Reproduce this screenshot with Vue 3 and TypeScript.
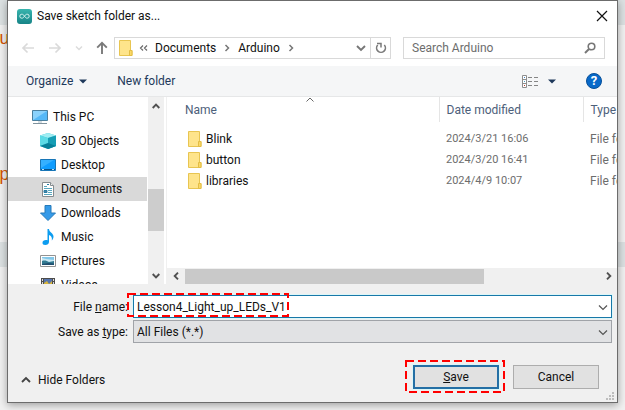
<script setup lang="ts">
import { ref } from 'vue'

interface Place {
  name: string
  icon: 'pc' | 'objects' | 'desktop' | 'documents' | 'downloads' | 'music' | 'pictures' | 'videos'
}

interface Folder {
  name: string
  modified: string
  type: string
}

const places: Place[] = [
  { name: 'This PC', icon: 'pc' },
  { name: '3D Objects', icon: 'objects' },
  { name: 'Desktop', icon: 'desktop' },
  { name: 'Documents', icon: 'documents' },
  { name: 'Downloads', icon: 'downloads' },
  { name: 'Music', icon: 'music' },
  { name: 'Pictures', icon: 'pictures' },
  { name: 'Videos', icon: 'videos' },
]

const folders: Folder[] = [
  { name: 'Blink', modified: '2024/3/21 16:06', type: 'File folder' },
  { name: 'button', modified: '2024/3/20 16:41', type: 'File folder' },
  { name: 'libraries', modified: '2024/4/9 10:07', type: 'File folder' },
]

const selected = ref('Documents')
const fileName = ref('Lesson4_Light_up_LEDs_V1')
const fileType = ref('All Files (*.*)')
const search = ref('')
</script>

<template>
  <div class="screen">
    <div class="editor" aria-hidden="true">
      <div class="band top"></div>
      <div class="code first">u</div>
      <div class="code second">p</div>
      <div class="band status"></div>
    </div>

    <form class="dialog" role="dialog" aria-labelledby="dialog-title" @submit.prevent>
      <header class="titlebar">
        <svg class="logo" width="15" height="15" viewBox="0 0 15 15">
          <defs>
            <linearGradient id="teal" x1="0" y1="0" x2="0" y2="1">
              <stop offset="0" stop-color="#38b5ae" />
              <stop offset="1" stop-color="#178487" />
            </linearGradient>
          </defs>
          <rect width="15" height="15" rx="3" fill="url(#teal)" />
          <path d="M7.5 7.2C6.5 5.6 5.7 5.2 4.8 5.2a2 2 0 0 0 0 4c.9 0 1.7-.4 2.7-2s1.8-2 2.7-2a2 2 0 0 1 0 4c-.9 0-1.7-.4-2.7-2z" fill="none" stroke="#d5f3f0" />
        </svg>
        <h1 id="dialog-title">Save sketch folder as...</h1>
        <button type="button" class="plain close" aria-label="Close">
          <svg width="12" height="12" viewBox="0 0 12 12"><path d="M1 1l10 10M11 1L1 11" fill="none" stroke="#111" stroke-width="1.2" /></svg>
        </button>
      </header>

      <div class="navbar">
        <div class="history">
          <button type="button" class="plain" aria-label="Back">
            <svg width="14" height="12" viewBox="0 0 14 12"><path d="M13 6H2M6.5 1.5L2 6l4.500 4.500" fill="none" stroke="#dadada" stroke-width="1.700" /></svg>
          </button>
          <button type="button" class="plain" aria-label="Forward">
            <svg width="14" height="12" viewBox="0 0 14 12"><path d="M1 6h11M7.500 1.500L12 6l-4.500 4.500" fill="none" stroke="#dadada" stroke-width="1.700" /></svg>
          </button>
          <button type="button" class="plain" aria-label="Recent locations">
            <svg width="8" height="6" viewBox="0 0 8 6"><path d="M1 1.500l3 3 3-3" fill="none" stroke="#dcdcdc" stroke-width="1.500" /></svg>
          </button>
          <button type="button" class="plain" aria-label="Up">
            <svg width="12" height="14" viewBox="0 0 12 14"><path d="M6 13V2M1.200 6.700L6 1.900l4.800 4.800" fill="none" stroke="#7a7a7a" stroke-width="1.900" /></svg>
          </button>
        </div>
        <nav class="address" aria-label="Location">
          <svg class="folder" width="14" height="16" viewBox="0 0 14 16">
            <path d="M.5.5h11v10h1.500v5H.5z" fill="#fee48b" stroke="#e8c551" />
            <path d="M10.500 15.500v-5H13v5z" fill="#fbd968" stroke="#e3bd45" />
          </svg>
          <svg class="dbl" width="9" height="6" viewBox="0 0 9 6"><path d="M4 .5L1.500 3 4 5.500M8 .5L5.500 3 8 5.500" fill="none" stroke="#6a6a6a" stroke-width="1.200" /></svg>
          <a href="#">Documents</a>
          <svg class="sep" width="6" height="8" viewBox="0 0 6 8"><path d="M1.500 1l3 3-3 3" fill="none" stroke="#777" stroke-width="1.500" /></svg>
          <a href="#">Arduino</a>
          <svg class="sep" width="6" height="8" viewBox="0 0 6 8"><path d="M1.500 1l3 3-3 3" fill="none" stroke="#777" stroke-width="1.500" /></svg>
          <button type="button" class="plain drop" aria-label="Previous locations">
            <svg width="10" height="7" viewBox="0 0 10 7"><path d="M1 1l4 4 4-4" fill="none" stroke="#777" stroke-width="1.900" /></svg>
          </button>
          <button type="button" class="plain refresh" aria-label="Refresh">
            <svg width="12" height="12" viewBox="0 0 12 12">
              <path d="M9.300 3a4.400 4.400 0 1 1-6.600 0" fill="none" stroke="#7a7a7a" stroke-width="1.600" />
              <path d="M2 1.500h4v4" fill="none" stroke="#7a7a7a" stroke-width="1.500" />
            </svg>
          </button>
        </nav>
        <div class="search">
          <input v-model="search" type="text" placeholder="Search Arduino" aria-label="Search Arduino" />
          <svg width="12" height="12" viewBox="0 0 12 12">
            <circle cx="7.500" cy="4.500" r="3.300" fill="none" stroke="#777" stroke-width="1.600" />
            <path d="M5 7L1 11" stroke="#777" stroke-width="2" />
          </svg>
        </div>
      </div>

      <div class="toolbar">
        <button type="button" class="plain">
          Organize
          <svg width="8" height="5" viewBox="0 0 8 5"><path d="M0 .5h8L4 4.500z" fill="#1e395b" /></svg>
        </button>
        <button type="button" class="plain">New folder</button>
        <button type="button" class="plain view" aria-label="Change your view">
          <svg width="17" height="13" viewBox="0 0 17 13">
            <path d="M.5.5h4v12h-4zM.5 4.500h4M.5 8.500h4" fill="#fff" stroke="#8d8d8d" />
            <path d="M2 2.500h1" stroke="#3e7fc1" /><path d="M2 6.500h1" stroke="#4ba3c7" /><path d="M2 10.500h1" stroke="#c0392b" />
            <path d="M6 2.500h4M12 2.500h4M6 6.500h4M12 6.500h4M6 10.500h4M12 10.500h4" stroke="#858585" />
          </svg>
          <svg width="8" height="5" viewBox="0 0 8 5"><path d="M0 .5h8L4 4.500z" fill="#1e395b" /></svg>
        </button>
        <button type="button" class="plain help" aria-label="Help">?</button>
      </div>

      <main class="panes">
        <ul class="places">
          <li v-for="place in places" :key="place.name">
            <button
              type="button"
              class="plain place"
              :class="{ nested: place.icon !== 'pc', current: selected === place.name }"
              @click="selected = place.name"
            >
              <svg v-if="place.icon === 'pc'" width="16" height="16" viewBox="0 0 16 16">
                <path d="M.5 1.500h15v10H.5z" fill="#55b8f7" stroke="#4a7f9e" />
                <path d="M1 2h14L1 11z" fill="#8ad2fc" />
                <path d="M6 12h4v2H6z" fill="#d4dde2" /><path d="M1 14.500h14" stroke="#7f929d" />
              </svg>
              <svg v-else-if="place.icon === 'objects'" width="16" height="16" viewBox="0 0 16 16">
                <path d="M8 0l8 2.500v10.500L8 16 0 13V2.500z" fill="#35c6d8" />
                <path d="M8 0l8 2.500L8 5 0 2.500z" fill="#a0edf2" />
                <path d="M8 5l8-2.500V13l-8 3z" fill="#159db4" />
                <path d="M0 2.500L8 5v5L0 13z" fill="#5cdae5" /><path d="M8 10l8 3-8 3-8-3z" fill="#087f98" />
              </svg>
              <svg v-else-if="place.icon === 'desktop'" width="16" height="12" viewBox="0 0 16 12">
                <path d="M.5.5h15v11H.5z" fill="#109dff" stroke="#1876b7" />
                <path d="M1 1h13L1 9z" fill="#35b0ff" /><path d="M1 10.500h14" stroke="#08538a" />
                <path d="M2 10.500h2M12 10.500h2" stroke="#b1e1ff" />
              </svg>
              <svg v-else-if="place.icon === 'documents'" width="12" height="15" viewBox="0 0 12 15">
                <path d="M.5.500h8l3 3v11H.500z" fill="#fff" stroke="#858b8e" />
                <path d="M8.500.500v3h3" fill="#eee" stroke="#858b8e" />
                <path d="M2 4.500h3M2 6.500h8M6 8.500h4M6 10.500h4M2 12.500h8" stroke="#58a7bf" />
                <path d="M5 2.500h2M2 8.500h3v2H2z" fill="#5083a7" stroke="#287da3" />
              </svg>
              <svg v-else-if="place.icon === 'downloads'" width="16" height="16" viewBox="0 0 16 16">
                <path d="M5 .500h6V8h4.500L8 15.500.500 8H5z" fill="#359ae8" stroke="#277ab9" />
              </svg>
              <svg v-else-if="place.icon === 'music'" width="12" height="16" viewBox="0 0 12 16">
                <path d="M5.500 0h1.500c.3 3.500 4.500 4.200 4.500 7.500 0 1.800-.8 3-1.700 4 .5-3-.5-4.500-2.800-5.500v7c0 2-1.700 3-3.700 3S.500 15 .500 13.700c0-2 2.500-3.300 5-2.400z" fill="#0d9df0" />
              </svg>
              <svg v-else-if="place.icon === 'pictures'" width="16" height="12" viewBox="0 0 16 12">
                <path d="M.500.500h15v11H.500z" fill="#fff" stroke="#929292" />
                <path d="M2 2h12v8H2z" fill="#82c7e9" />
                <path d="M2 3l4 1 8 1v2H2z" fill="#cce9f4" /><path d="M2 6c3-1 5 0 7 1l5-1v4H2z" fill="#327a91" /><path d="M2 9l6-1 6 .500V10H2z" fill="#214f70" />
              </svg>
              <svg v-else width="14" height="14" viewBox="0 0 14 14">
                <path d="M0 0h14v14H0z" fill="#4c4c4c" />
                <path d="M1.500 1v13M12.500 1v13" stroke="#ddd" stroke-dasharray="2 1" />
                <path d="M3 1h8v12H3z" fill="#5574ad" /><path d="M3 5l3-2 2 3 3-3v4H3z" fill="#d8b53c" />
              </svg>
              <span>{{ place.name }}</span>
            </button>
          </li>
        </ul>
        <div class="vscroll">
          <svg width="8" height="6" viewBox="0 0 8 6"><path d="M.700 5L4 1.700 7.300 5" fill="none" stroke="#505050" stroke-width="1.900" /></svg>
          <div class="vtrack"><div class="vthumb"></div></div>
          <svg width="8" height="6" viewBox="0 0 8 6"><path d="M.700 1L4 4.300 7.300 1" fill="none" stroke="#505050" stroke-width="1.900" /></svg>
        </div>

        <section class="files">
          <svg class="sorted" width="8" height="5" viewBox="0 0 8 5"><path d="M.500 4.500L4 1l3.500 3.500" fill="none" stroke="#666" /></svg>
          <table>
            <thead>
              <tr>
                <th class="name">Name</th>
                <th class="date">Date modified</th>
                <th class="type">Type</th>
              </tr>
            </thead>
            <tbody>
              <tr v-for="folder in folders" :key="folder.name">
                <td class="name">
                  <div class="entry">
                    <svg width="14" height="16" viewBox="0 0 14 16">
                      <path d="M.500.500h11v10h1.500v5H.500z" fill="#fee48b" stroke="#e8c551" />
                      <path d="M10.500 15.500v-5H13v5z" fill="#fbd968" stroke="#e3bd45" />
                    </svg>
                    {{ folder.name }}
                  </div>
                </td>
                <td class="stamp">{{ folder.modified }}</td>
                <td>{{ folder.type }}</td>
              </tr>
            </tbody>
          </table>
          <div class="hscroll">
            <svg width="6" height="8" viewBox="0 0 6 8"><path d="M5 .700L1.700 4 5 7.300" fill="none" stroke="#505050" stroke-width="1.900" /></svg>
            <div class="htrack"><div class="hthumb"></div></div>
            <svg width="6" height="8" viewBox="0 0 6 8"><path d="M1 .700L4.300 4 1 7.300" fill="none" stroke="#505050" stroke-width="1.900" /></svg>
          </div>
        </section>
      </main>

      <div class="fields">
        <label for="file-name">File <u>n</u>ame:</label>
        <div class="control active">
          <input id="file-name" v-model="fileName" type="text" />
          <svg class="arrow" width="10" height="6" viewBox="0 0 10 6"><path d="M1 .500l4 4 4-4" fill="none" stroke="#555" stroke-width="1.200" /></svg>
          <svg class="mark name-mark" aria-hidden="true"><rect x="1" y="1" /></svg>
        </div>
        <label for="file-type">Save as <u>t</u>ype:</label>
        <div class="control">
          <select id="file-type" v-model="fileType">
            <option>All Files (*.*)</option>
          </select>
          <svg class="arrow" width="10" height="6" viewBox="0 0 10 6"><path d="M1 .500l4 4 4-4" fill="none" stroke="#555" stroke-width="1.200" /></svg>
        </div>
      </div>

      <footer class="actions">
        <button type="button" class="plain hide">
          <svg width="10" height="7" viewBox="0 0 10 7"><path d="M1 6l4-4 4 4" fill="none" stroke="#444" stroke-width="1.900" /></svg>
          Hide Folders
        </button>
        <div class="save-wrap">
          <button type="submit" class="push primary"><u>S</u>ave</button>
          <svg class="mark save-mark" aria-hidden="true"><rect x="1" y="1" /></svg>
        </div>
        <button type="button" class="push">Cancel</button>
        <svg class="grip" width="8" height="8" viewBox="0 0 8 8"><path d="M6 0h2v2H6zM3 3h2v2H3zM6 3h2v2H6zM0 6h2v2H0zM3 6h2v2H3zM6 6h2v2H6z" fill="#bdbdbd" /></svg>
      </footer>
    </form>
  </div>
</template>

<style>
body {
  margin: 0;
}
</style>

<style scoped>
* {
  box-sizing: border-box;
}

.screen {
  position: relative;
  height: 100vh;
  min-height: 380px;
  padding: 0 7px 7px;
  overflow: hidden;
  background: #f1f1f1;
  color: #111;
  font: 12px/16px Roboto, 'Open Sans', sans-serif;
}

.editor {
  position: absolute;
  inset: 0;
}

.band {
  position: absolute;
  left: 0;
  right: 0;
  height: 25px;
  background: #dce1e2;
}

.band.top {
  top: 0;
}

.band.status {
  top: 242px;
}

.code {
  position: absolute;
  left: -1px;
  color: #d35400;
  font: 18px/20px 'Liberation Mono', monospace;
}

.code.first {
  top: 29px;
}

.code.second {
  top: 165px;
}

.dialog {
  position: relative;
  display: flex;
  flex-direction: column;
  height: 100%;
  background: #f0f0f0;
  border: 1px solid #6c6c6c;
  box-shadow: 0 2px 8px rgba(0, 0, 0, 0.35);
}

button,
input,
select {
  color: inherit;
  font: inherit;
}

.plain {
  display: flex;
  align-items: center;
  padding: 0;
  border: 0;
  background: none;
}

svg {
  flex: none;
}

.titlebar {
  display: flex;
  align-items: center;
  height: 30px;
  padding: 0 9px;
  background: #fff;
}

h1 {
  flex: 1;
  margin: 0 0 0 5px;
  font-size: 12px;
  font-weight: 400;
}

.navbar {
  display: flex;
  align-items: center;
  height: 35px;
  padding: 0 12px 1px 13px;
  background: #fff;
}

.history {
  display: flex;
  align-items: center;
  gap: 13px;
  width: 93px;
}

.address,
.search {
  display: flex;
  align-items: center;
  height: 22px;
  border: 1px solid #d9d9d9;
}

.address {
  flex: 1;
  margin-right: 12px;
  padding-left: 4px;
}

.address a {
  color: inherit;
  text-decoration: none;
}

.dbl {
  margin: 0 7px 0 6px;
}

.sep {
  margin: 0 8px;
}

.drop {
  margin-left: auto;
  padding: 0 4px;
}

.refresh {
  justify-content: center;
  align-self: stretch;
  width: 20px;
  border-left: 1px solid #d9d9d9;
}

.search {
  width: 202px;
  padding: 0 8px;
}

.search input {
  flex: 1;
  min-width: 0;
  padding: 0;
  border: 0;
  outline: 0;
}

.search input::placeholder {
  color: #6d6d6d;
  opacity: 1;
}

.toolbar {
  display: flex;
  align-items: center;
  height: 31px;
  padding: 0 15px 0 18px;
  background: #f5f6f7;
  border-bottom: 1px solid #e6e7e8;
  color: #1e395b;
}

.toolbar .plain {
  gap: 6px;
  margin-right: 30px;
}

.toolbar .view {
  gap: 9px;
  margin-left: auto;
}

.toolbar .help {
  justify-content: center;
  width: 16px;
  height: 16px;
  margin: 0;
  border: 1px solid #07509a;
  border-radius: 50%;
  background: #0869c9;
  color: #fff;
  font-size: 13px;
  font-weight: 700;
}

.panes {
  display: flex;
  flex: 1;
  min-height: 0;
  background: #fff;
}

.places {
  width: 140px;
  margin: 0;
  padding: 8px 1px 0 0;
  overflow: hidden;
  list-style: none;
}

.place {
  gap: 5px;
  width: 100%;
  height: 24px;
  padding-left: 24px;
}

.place.nested {
  padding-left: 32px;
}

.place.nested svg {
  width: 16px;
}

.place.current {
  background: #d9d9d9;
}

.vscroll {
  display: flex;
  flex-direction: column;
  align-items: center;
  width: 16px;
  padding: 6px 0 5px;
  background: #f0f0f0;
}

.vtrack {
  flex: 1;
  display: flex;
  align-items: flex-end;
  width: 100%;
  padding-bottom: 42px;
}

.vthumb {
  width: 100%;
  height: 42px;
  background: #cdcdcd;
}

.files {
  position: relative;
  display: flex;
  flex: 1;
  flex-direction: column;
  justify-content: space-between;
  min-width: 0;
  margin-left: 2px;
  border-left: 1px solid #f0f0f0;
}

.sorted {
  position: absolute;
  top: 0;
  left: 139px;
}

table {
  width: 100%;
  border-collapse: collapse;
  table-layout: fixed;
}

th,
td {
  height: 21px;
  padding: 0 0 0 7px;
  overflow: hidden;
  color: #6d6d6d;
  font-weight: 400;
  text-align: left;
  white-space: nowrap;
}

th {
  height: 25px;
  border-left: 1px solid #e5e5e5;
  color: #4c607a;
}

th.name {
  padding-left: 18px;
  border-left: 0;
}

th.date {
  width: 144px;
}

th.type {
  width: 34px;
}

td.name {
  padding-left: 21px;
  color: #111;
}

td.stamp {
  font-size: 11px;
}

tbody::before {
  display: block;
  height: 6px;
  content: '';
}

.entry {
  display: flex;
  align-items: center;
  gap: 4px;
}

.hscroll {
  display: flex;
  align-items: center;
  height: 16px;
  padding: 0 5px 0 6px;
  background: #f0f0f0;
}

.htrack {
  flex: 1;
  height: 15px;
  margin: 0 6px;
}

.hthumb {
  width: 72%;
  height: 100%;
  background: #c9c9c9;
}

.fields {
  display: grid;
  grid-template-columns: 120px 1fr;
  gap: 2px 5px;
  padding: 11px 5px 0 0;
}

.fields label {
  align-self: center;
  text-align: right;
}

.control {
  position: relative;
  display: flex;
  height: 23px;
  border: 1px solid #a0a3a8;
  background: #e1e2e4;
}

.control.active {
  border-color: #1878a8;
  background: #fff;
  box-shadow: 0 0 0 1px #dcf6f8;
}

.control input,
.control select {
  flex: 1;
  min-width: 0;
  padding: 0 20px 0 3px;
  border: 0;
  outline: 0;
  background: none;
  appearance: none;
}

.arrow {
  position: absolute;
  top: 9px;
  right: 3px;
  pointer-events: none;
}

.mark {
  position: absolute;
  overflow: visible;
  pointer-events: none;
}

.mark rect {
  width: calc(100% - 2px);
  height: calc(100% - 2px);
  fill: none;
  stroke: #f00;
  stroke-width: 2px;
  stroke-dasharray: 8 4;
}

.name-mark {
  top: -3px;
  left: -7px;
  width: 162px;
  height: 24px;
}

.actions {
  position: relative;
  display: flex;
  align-items: center;
  gap: 14px;
  height: 59px;
  padding: 8px 18px 0 13px;
}

.hide {
  gap: 7px;
  margin-right: auto;
  padding-top: 6px;
}

.save-wrap {
  position: relative;
}

.push {
  display: block;
  width: 86px;
  height: 24px;
  padding: 0;
  border: 1px solid #adadad;
  background: #e1e1e1;
}

.push.primary {
  border: 2px solid #246fa5;
  box-shadow: 0 0 0 1px #dcf6f8;
}

.save-mark {
  inset: -5px -8px;
  width: 100px;
  height: 33px;
}

.grip {
  position: absolute;
  right: 3px;
  bottom: 2px;
}
</style>
